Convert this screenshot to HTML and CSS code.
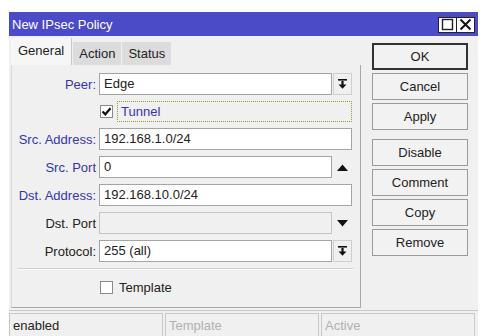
FILE: index.html
```html
<!DOCTYPE html>
<html lang="en">
<head>
    <meta charset="UTF-8">
    <title>New IPsec Policy</title>
    <link rel="stylesheet" href="styles.css">
</head>
<body>
    <div class="window">
        <div class="titlebar">
            <span class="title">New IPsec Policy</span>
            <div class="title-buttons">
                <span class="tbtn">
                    <svg width="15" height="15" viewBox="0 0 15 15"><rect x="2.5" y="2.5" width="10" height="10" fill="none" stroke="#222" stroke-width="1.4"/></svg>
                </span>
                <span class="tbtn">
                    <svg width="15" height="15" viewBox="0 0 15 15"><path d="M2.5 2.5 L12.5 12.5 M12.5 2.5 L2.5 12.5" stroke="#111" stroke-width="2"/></svg>
                </span>
            </div>
        </div>

        <div class="main">
            <div class="left">
                <div class="tabs">
                    <div class="tab active">General</div>
                    <div class="tab">Action</div>
                    <div class="tab">Status</div>
                </div>
                <div class="panel">
                    <div class="row">
                        <label class="lbl blue">Peer:</label>
                        <div class="field short">Edge</div>
                        <span class="dd">
                            <svg width="9" height="10" viewBox="0 0 9 10"><rect x="0" y="0" width="9" height="1.6" fill="#111"/><rect x="3.4" y="2" width="2.2" height="4" fill="#111"/><path d="M0.5 5.5 L8.5 5.5 L4.5 9.8 Z" fill="#111"/></svg>
                        </span>
                    </div>
                    <div class="row tight">
                        <span class="lbl"></span>
                        <span class="check checked">
                            <svg width="11" height="11" viewBox="0 0 11 11"><path d="M1.5 5.5 L4.3 8.3 L9.5 2.3" fill="none" stroke="#111" stroke-width="2.2"/></svg>
                        </span>
                        <span class="focus blue">Tunnel</span>
                    </div>
                    <div class="row">
                        <label class="lbl blue">Src. Address:</label>
                        <div class="field">192.168.1.0/24</div>
                    </div>
                    <div class="row">
                        <label class="lbl blue">Src. Port</label>
                        <div class="field short">0</div>
                        <span class="arrow">
                            <svg width="11" height="7" viewBox="0 0 11 7"><path d="M0 7 L5.5 0.5 L11 7 Z" fill="#111"/></svg>
                        </span>
                    </div>
                    <div class="row">
                        <label class="lbl blue">Dst. Address:</label>
                        <div class="field">192.168.10.0/24</div>
                    </div>
                    <div class="row">
                        <label class="lbl">Dst. Port</label>
                        <div class="field short disabled"></div>
                        <span class="arrow">
                            <svg width="11" height="7" viewBox="0 0 11 7"><path d="M0 0 L11 0 L5.5 6.5 Z" fill="#111"/></svg>
                        </span>
                    </div>
                    <div class="row">
                        <label class="lbl">Protocol:</label>
                        <div class="field short">255 (all)</div>
                        <span class="dd">
                            <svg width="9" height="10" viewBox="0 0 9 10"><rect x="0" y="0" width="9" height="1.6" fill="#111"/><rect x="3.4" y="2" width="2.2" height="4" fill="#111"/><path d="M0.5 5.5 L8.5 5.5 L4.5 9.8 Z" fill="#111"/></svg>
                        </span>
                    </div>
                    <div class="sep"></div>
                    <div class="row template">
                        <span class="lbl"></span>
                        <span class="check"></span>
                        <span class="check-text">Template</span>
                    </div>
                </div>
            </div>

            <div class="buttons">
                <button class="default">OK</button>
                <button>Cancel</button>
                <button>Apply</button>
                <button class="group">Disable</button>
                <button>Comment</button>
                <button>Copy</button>
                <button>Remove</button>
            </div>
        </div>

        <div class="statusbar">
            <div class="seg">enabled</div>
            <div class="seg dim">Template</div>
            <div class="seg dim">Active</div>
        </div>
    </div>
</body>
</html>
```

FILE: styles.css
```css
body {
    margin: 0;
    background: white;
    font-family: "Liberation Sans", Arial, sans-serif;
    font-size: 13px;
    color: #222;
    overflow: hidden;
}
.window {
    margin: 12px 0 0 9px;
    width: 469px;
    height: 324px;
    background: #f0f0f0;
}
.titlebar {
    height: 24px;
    background: #4b4bc8;
    display: flex;
    align-items: center;
    justify-content: space-between;
    padding: 0 3px;
    color: white;
}
.title-buttons {
    display: flex;
    border: 1px solid #222;
    background: #222;
    gap: 1px;
    margin-top: 1px;
}
.tbtn {
    width: 17px;
    height: 14px;
    background: white;
    display: flex;
    align-items: center;
    justify-content: center;
}
.main {
    display: flex;
    height: 274px;
    padding-left: 2px;
}
.left {
    width: 350px;
}
.tabs {
    display: flex;
    align-items: flex-end;
    height: 29px;
    gap: 1px;
}
.tab {
    height: 23px;
    line-height: 23px;
    padding: 0 6px;
    background: #dcdcdc;
}
.tab.active {
    height: 27px;
    line-height: 25px;
    padding: 0 7px;
    background: #f6f6f6;
    border-right: 1px solid #c8c8c8;
}
.panel {
    height: 243px;
    border-right: 1px solid #a8a8a8;
    border-bottom: 1px solid #a8a8a8;
    border-left: 1px solid #d8d8d8;
    padding-top: 8px;
    box-sizing: border-box;
}
.row {
    display: flex;
    align-items: center;
    height: 22px;
    margin-bottom: 6px;
}
.row.tight {
    height: 21px;
}
.lbl {
    width: 84px;
    padding-right: 3px;
    text-align: right;
    flex-shrink: 0;
}
.blue {
    color: #3535b0;
}
.field {
    width: 253px;
    height: 22px;
    box-sizing: border-box;
    border: 1px solid #a4a4a4;
    background: white;
    padding-left: 4px;
    line-height: 20px;
}
.field.short {
    width: 233px;
}
.field.disabled {
    background: #f0f0f0;
    border-color: #c4c4c4;
}
.dd {
    width: 19px;
    height: 22px;
    margin-left: 1px;
    box-sizing: border-box;
    border: 1px solid #cfcfcf;
    display: flex;
    align-items: center;
    justify-content: center;
}
.arrow {
    width: 20px;
    display: flex;
    justify-content: center;
}
.check {
    width: 13px;
    height: 13px;
    box-sizing: border-box;
    border: 1px solid #8a8a8a;
    background: white;
    display: flex;
    align-items: center;
    justify-content: center;
    margin-left: 1px;
}
.focus {
    margin-left: 4px;
    width: 235px;
    height: 21px;
    box-sizing: border-box;
    border: 1px dotted #9a9a30;
    padding-left: 3px;
    line-height: 19px;
}
.sep {
    margin: 1px 0 0 6px;
    width: 335px;
    border-top: 1px solid #cfcfcf;
    border-bottom: 1px solid white;
}
.row.template {
    margin-top: 6px;
}
.check-text {
    margin-left: 6px;
}
.buttons {
    display: flex;
    flex-direction: column;
    gap: 3px;
    margin-left: 11px;
    padding-top: 7px;
    width: 96px;
}
button {
    height: 27px;
    background: #f2f2f2;
    border: 1px solid #9a9a9a;
    font-family: "Liberation Sans", Arial, sans-serif;
    font-size: 13px;
    color: #222;
    padding: 0;
}
button.default {
    border: 2px solid #333;
}
button.group {
    margin-top: 6px;
}
.statusbar {
    display: flex;
    gap: 2px;
    padding-top: 2px;
    border-top: 1px solid #c8c8c8;
}
.seg {
    width: 154px;
    height: 26px;
    box-sizing: border-box;
    border: 1px solid #c8c8c8;
    padding: 4px 3px;
}
.seg.dim {
    color: #b0b0b0;
}
```
